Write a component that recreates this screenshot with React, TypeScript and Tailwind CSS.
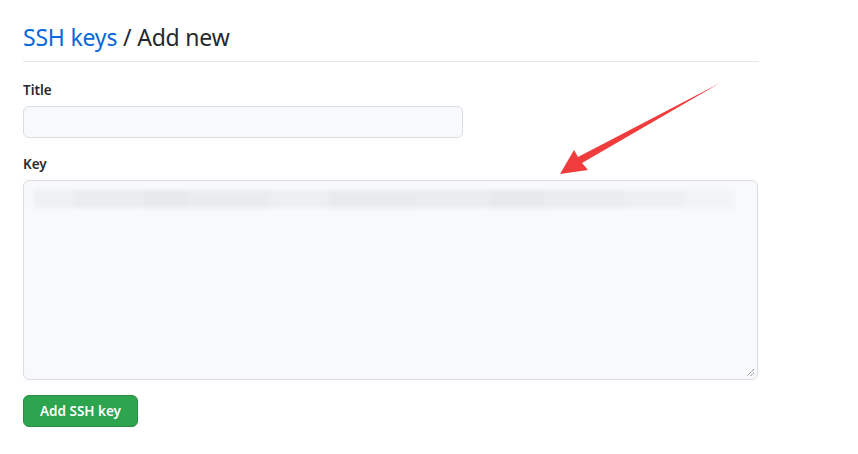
const blurBlocks = [
  { w: 40, o: 0.5 },
  { w: 70, o: 0.7 },
  { w: 45, o: 0.9 },
  { w: 80, o: 0.8 },
  { w: 60, o: 0.6 },
  { w: 90, o: 0.85 },
  { w: 70, o: 0.7 },
  { w: 55, o: 0.9 },
  { w: 80, o: 0.75 },
  { w: 60, o: 0.55 },
  { w: 50, o: 0.35 },
]

export default function App() {
  return (
    <div
      className="relative w-[858px] h-[454px] bg-white text-[#24292f] overflow-hidden"
      style={{ fontFamily: '"Noto Sans", "Open Sans", sans-serif' }}
    >
      <div className="pl-[23px] pt-[21px] w-[759px]">
        <div className="border-b border-[#e5e7ea] pb-[8px]">
          <h2 className="text-[23px] leading-[32px] font-normal tracking-[-0.2px]">
            <a className="text-[#0969da]">SSH keys</a> / Add new
          </h2>
        </div>

        <div className="mt-[18px]">
          <label className="block text-[13.5px] leading-[20px] font-semibold">Title</label>
          <div className="mt-[6px] w-[440px] h-[32px] rounded-[6px] border border-[#dadee3] bg-[#f8f9fb]" />
        </div>

        <div className="mt-[16px]">
          <label className="block text-[13.5px] leading-[20px] font-semibold">Key</label>
          <div className="relative mt-[6px] w-[735px] h-[200px] rounded-[6px] border border-[#dadee3] bg-[#f8f9fb] pt-[9px] pl-[10px]">
            <div className="flex h-[18px] blur-[2px]">
              {blurBlocks.map((b, i) => (
                <div
                  key={i}
                  className="h-full bg-[#e6e7ea]"
                  style={{ width: b.w, opacity: b.o }}
                />
              ))}
            </div>
            {/* resize grip */}
            <svg className="absolute right-[2px] bottom-[2px]" width="9" height="9" viewBox="0 0 9 9">
              <path d="M8 1 L1 8 M8 4.5 L4.5 8" stroke="#555" strokeWidth="1" strokeDasharray="1 1" />
            </svg>
          </div>
        </div>

        <button className="mt-[15px] h-[32px] px-[16px] rounded-[6px] border border-[#2a8d45] bg-[#2da44e] text-white text-[13.5px] font-semibold leading-[20px]">
          Add SSH key
        </button>
      </div>

      {/* annotation arrow */}
      <svg className="absolute left-0 top-0 pointer-events-none" width="858" height="454">
        <polygon
          points="720,83 578,157 574,150 560,174 588,170 582,163"
          fill="#f03c3c"
        />
      </svg>
    </div>
  )
}
